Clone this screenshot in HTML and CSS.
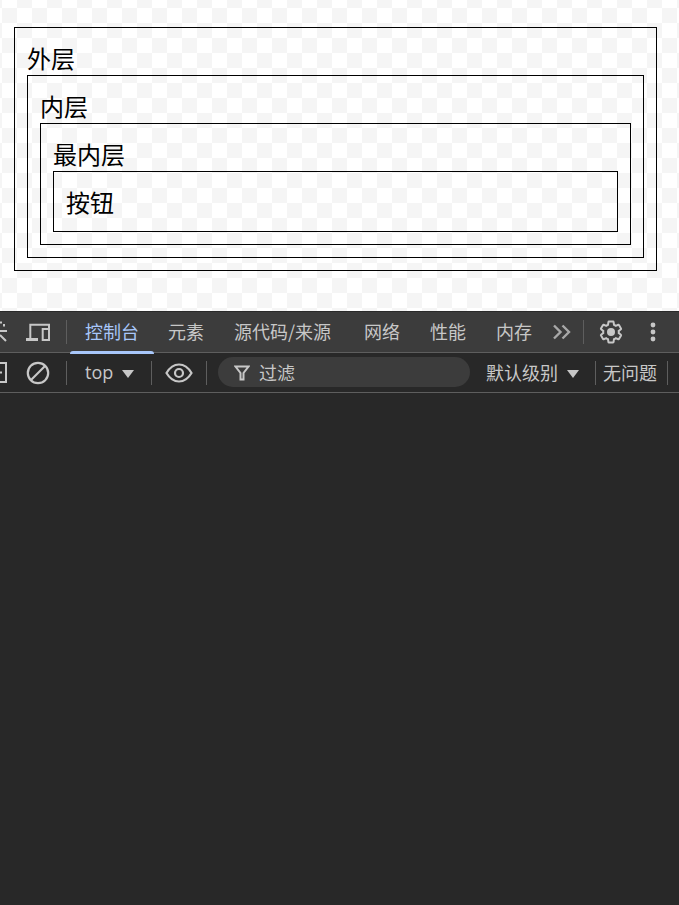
FILE: index.html
```html
<!DOCTYPE html>
<html lang="zh-CN">
<head>
<meta charset="utf-8">
<title>事件冒泡</title>
<link rel="stylesheet" href="styles.css">
</head>
<body>
<main class="page">
  <div class="box">外层
    <div class="box">内层
      <div class="box">最内层
        <div class="box">按钮</div>
      </div>
    </div>
  </div>
</main>
<section class="devtools">
  <nav class="tabs">
    <svg class="clip-left" width="7" height="24" viewBox="0 0 7 24"><path d="M-1 2.500H2M4 4V6.500M-1 11H7M0 15L6 21" fill="none" stroke="#c7c7c7" stroke-width="2"/></svg>
    <svg class="icon device" width="26" height="24" viewBox="0 0 26 24"><path d="M4.300 18V4.700H23V8" fill="none" stroke="#c7c7c7" stroke-width="2"/><rect x="0" y="18" width="12" height="3" fill="#c7c7c7"/><rect x="16.700" y="9" width="6.300" height="11" fill="none" stroke="#c7c7c7" stroke-width="2"/></svg>
    <span class="sep"></span>
    <span class="tab active">控制台</span>
    <span class="tab">元素</span>
    <span class="tab tab-wide">源代码/来源</span>
    <span class="tab">网络</span>
    <span class="tab">性能</span>
    <span class="tab">内存</span>
    <svg class="more" width="20" height="18" viewBox="0 0 20 18"><path d="M2 2.500L8.500 9L2 15.500M10.500 2.500L17 9L10.500 15.500" fill="none" stroke="#a8a8a8" stroke-width="2.400"/></svg>
    <span class="sep sep-more"></span>
    <svg class="gear" width="26" height="26" viewBox="0 0 24 24"><path d="M19.140 12.940c.04-.3.06-.61.06-.94 0-.32-.02-.64-.07-.94l2.030-1.580c.18-.14.23-.41.12-.61l-1.920-3.320c-.12-.22-.37-.29-.59-.22l-2.390.96c-.5-.38-1.030-.7-1.620-.94l-.36-2.540c-.04-.24-.24-.41-.48-.41h-3.840c-.24 0-.43.17-.47.41l-.36 2.540c-.59.24-1.130.57-1.620.94l-2.390-.96c-.22-.08-.47 0-.59.22L2.740 8.870c-.12.21-.08.47.12.61l2.030 1.580c-.05.3-.09.63-.09.94s.02.64.07.94l-2.030 1.580c-.18.14-.23.41-.12.61l1.920 3.320c.12.22.37.29.59.22l2.390-.96c.5.38 1.030.7 1.620.94l.36 2.540c.05.24.24.41.48.41h3.840c.24 0 .44-.17.47-.41l.36-2.540c.59-.24 1.130-.56 1.620-.94l2.390.96c.22.08.47 0 .59-.22l1.920-3.320c.12-.22.07-.47-.12-.61l-2.010-1.580z" fill="none" stroke="#c7c7c7" stroke-width="1.850"/><circle cx="12" cy="12" r="3.700" fill="#c7c7c7"/></svg>
    <svg class="kebab" width="6" height="20" viewBox="0 0 6 20"><circle cx="3" cy="3" r="2.400" fill="#c7c7c7"/><circle cx="3" cy="10" r="2.400" fill="#c7c7c7"/><circle cx="3" cy="17" r="2.400" fill="#c7c7c7"/></svg>
  </nav>
  <div class="toolbar">
    <svg class="clip-left" width="7" height="22" viewBox="0 0 7 22"><path d="M-8 1H6V20H-8M-1 10.500H2" fill="none" stroke="#c7c7c7" stroke-width="2"/></svg>
    <svg class="icon clear" width="24" height="24" viewBox="0 0 24 24"><circle cx="12" cy="12" r="10.200" fill="none" stroke="#c7c7c7" stroke-width="2.200"/><path d="M5 19L19 5" stroke="#c7c7c7" stroke-width="2.200"/></svg>
    <span class="sep sep-clear"></span>
    <span class="context">top</span>
    <span class="caret"></span>
    <span class="sep sep-context"></span>
    <svg class="eye" width="28" height="20" viewBox="0 0 28 20"><path d="M1.500 10C5 4 9 1.500 14 1.500S23 4 26.500 10C23 16 19 18.500 14 18.500S5 16 1.500 10Z" fill="none" stroke="#c7c7c7" stroke-width="2.200"/><circle cx="14" cy="10" r="4" fill="none" stroke="#c7c7c7" stroke-width="2.200"/></svg>
    <span class="sep sep-eye"></span>
    <div class="filter">
      <svg class="funnel" width="16" height="16" viewBox="0 0 16 16"><path d="M1.500 1.500H14.500L9.500 8V14.500H6.500V8Z" fill="none" stroke="#c7c7c7" stroke-width="2"/></svg>
      <span class="filter-text">过滤</span>
    </div>
    <span class="level">默认级别</span>
    <span class="caret caret-level"></span>
    <span class="sep sep-level"></span>
    <span class="issues">无问题</span>
    <span class="sep sep-issues"></span>
  </div>
  <div class="console"></div>
</section>
</body>
</html>
```

FILE: styles.css
```css
html, body {
  margin: 0;
  height: 100%;
}
body {
  display: flex;
  flex-direction: column;
  width: 679px;
  height: 905px;
  overflow: hidden;
  font-family: "Noto Sans CJK SC", "Noto Sans", sans-serif;
}
.page {
  height: 311px;
  flex: none;
  padding: 27px 22px 0 14px;
  box-sizing: border-box;
  background-color: #fff;
  background-image: conic-gradient(#f5f5f5 25%, #fff 0 50%, #f5f5f5 0 75%, #fff 0);
  background-size: 30px 30px;
  background-position: 2px -7px;
}
.box {
  border: 1px solid #000;
  padding: 12px;
  font-size: 24px;
  line-height: 35px;
  color: #000;
}
.devtools {
  flex: 1;
  display: flex;
  flex-direction: column;
  background: #282828;
  color: #c7c7c7;
  font-size: 18px;
}
.tabs {
  height: 42px;
  flex: none;
  box-sizing: border-box;
  display: flex;
  align-items: center;
  background: #3c3c3c;
  border-top: 1px solid #2a2a2a;
  border-bottom: 1px solid #5e5e5e;
}
.toolbar {
  height: 40px;
  flex: none;
  box-sizing: border-box;
  display: flex;
  align-items: center;
  border-bottom: 1px solid #5e5e5e;
}
.console {
  flex: 1;
}
.clip-left {
  flex: none;
}
.device {
  margin-left: 19px;
}
.sep {
  flex: none;
  width: 1px;
  height: 24px;
  background: #5e5e5e;
  margin-left: 14px;
}
.tab {
  height: 41px;
  box-sizing: border-box;
  padding: 0 15px 2px;
  display: flex;
  align-items: center;
  line-height: 24px;
  white-space: nowrap;
}
.tab-wide {
  padding-right: 18px;
}
.active {
  margin-left: 3px;
  padding-right: 14px;
  color: #a8c7fa;
  position: relative;
}
.active::after {
  content: "";
  position: absolute;
  left: 0;
  right: -1px;
  bottom: -1px;
  height: 3px;
  border-radius: 3px 3px 0 0;
  background: #a8c7fa;
}
.more {
  margin-left: 5px;
}
.sep-more {
  margin-left: 11px;
}
.gear {
  margin-left: 14px;
}
.kebab {
  margin-left: 26px;
}
.clear {
  margin-left: 19px;
}
.sep-clear {
  margin-left: 16px;
}
.context {
  flex: none;
  width: 29px;
  margin-left: 18px;
  padding-bottom: 2px;
  font-family: "Open Sans", "Noto Sans", sans-serif;
}
.caret {
  flex: none;
  width: 0;
  height: 0;
  margin: 3px 0 0 8px;
  border-left: 6px solid transparent;
  border-right: 6px solid transparent;
  border-top: 8px solid #c7c7c7;
}
.sep-context {
  margin-left: 17px;
}
.eye {
  margin-left: 13px;
}
.sep-eye {
  margin-left: 13px;
}
.filter {
  flex: none;
  width: 252px;
  height: 30px;
  margin: 0 0 1px 11px;
  border-radius: 15px;
  background: #3c3c3c;
  display: flex;
  align-items: center;
  box-sizing: border-box;
  padding-left: 16px;
}
.funnel {
  margin-top: 1px;
}
.filter-text {
  margin-left: 9px;
  padding-bottom: 1px;
}
.level {
  margin-left: 16px;
  padding-bottom: 2px;
}
.caret-level {
  margin-left: 9px;
}
.sep-level {
  margin-left: 16px;
}
.issues {
  margin-left: 7px;
  padding-bottom: 2px;
}
.sep-issues {
  margin-left: 10px;
}
```
